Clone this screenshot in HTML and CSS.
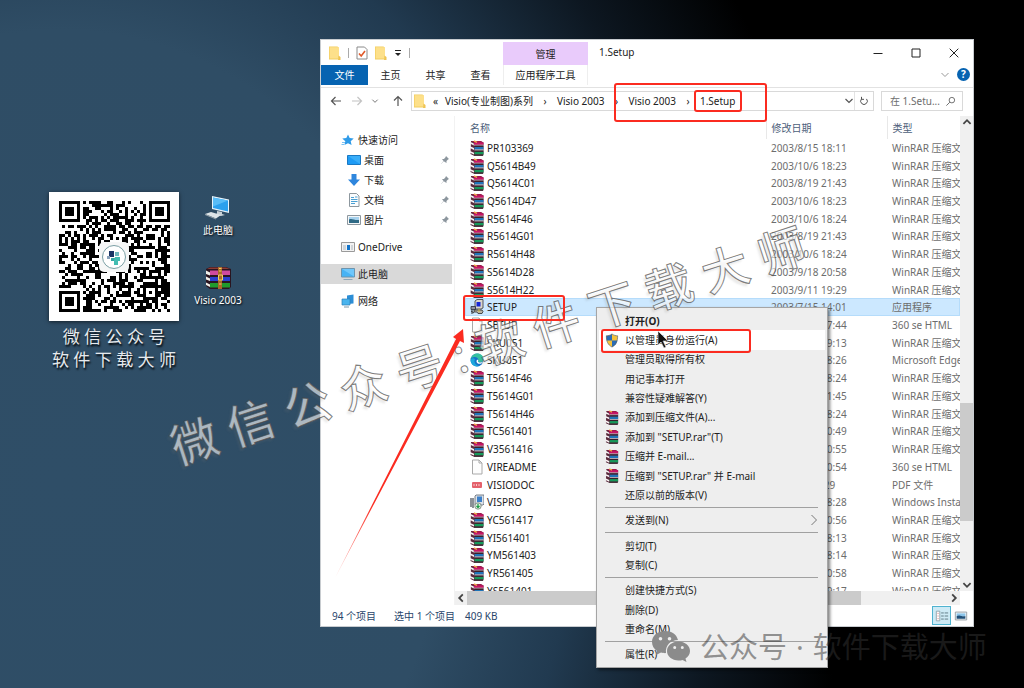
FILE: index.html
```html
<!DOCTYPE html>
<html lang="zh-CN">
<head>
  <meta charset="UTF-8">
  <meta name="viewport" content="width=device-width, initial-scale=1.0">
  <title>1.Setup</title>
  <link rel="stylesheet" href="styles.css">
</head>
<body>
  <svg class="sprite" aria-hidden="true">
    <symbol id="i-rar" viewBox="0 0 14 16">
      <path d="M1 1h9.500l3 1.500V15l-.5.7H4L.5 14z" fill="#5a2a3c"/>
      <path d="M1.500 1h9L13 2.300H4z" fill="#a3164c"/>
      <path d="M4 2.300h9.500v2.500H4z" fill="#cb1566"/>
      <path d="M4.500 7h9v2.600h-9z" fill="#1f74b8"/>
      <path d="M4.500 11.800h9v2.600h-9z" fill="#15995a"/>
      <path d="M0 1.800L3.800 3.600v1.800L0 3.600zM0 6.300l4 1.800v1.800L0 8.100zM0 11l4 1.800v1.800L0 12.800z" fill="#f8f3f5"/>
      <path d="M4 4.800h9.500v.8H4zM4.500 9.600h9v.8h-9z" fill="#e4dfe2"/>
      <path d="M4.500 6.200h9M4.500 11.100h9M4 15.200h9" stroke="#2b1c26" stroke-width=".9"/>
      <path d="M4 .8l3 1.500" stroke="#efb04a" stroke-width="1.300"/>
    </symbol>
    <symbol id="i-folder" viewBox="0 0 12 14">
      <path d="M0 .5h8.500l1 1V13.500H0z" fill="#f2cd60"/>
      <path d="M.7 1.200H10v11.300H.7z" fill="#fde08a"/>
      <path d="M9.500 9.500l2 1.500v3h-2.500z" fill="#efc453"/>
    </symbol>
    <symbol id="i-page" viewBox="0 0 14 16">
      <path d="M2.500 1h6.500l3 3v11h-9.500z" fill="#fdfdfd" stroke="#a9a9a9"/>
      <path d="M9 1v3h3" fill="none" stroke="#a9a9a9"/>
    </symbol>
    <symbol id="i-exe" viewBox="0 0 14 16">
      <path d="M5 2l2-1.500h6V9l-2 1H5z" fill="#d9d6cc" stroke="#33343a" stroke-width=".8"/>
      <path d="M6.500 3h4v4.500h-4z" fill="#1426d8"/>
      <path d="M1 7.500h4.500v3H1z" fill="#8f93a0" stroke="#2b2d38" stroke-width=".8"/>
      <path d="M4 11h8l1 1.500-1 2H8L7 13H4z" fill="#b7b4a6" stroke="#2c2b28" stroke-width=".8"/>
      <path d="M1 12l3 2M2 11v4" stroke="#333"/>
      <path d="M9 10v3" stroke="#d8c341"/>
    </symbol>
    <symbol id="i-edge" viewBox="0 0 14 16">
      <circle cx="7" cy="8" r="6.500" fill="#1573c8"/>
      <path d="M.6 7C1.500 3.500 4 1.500 7.500 1.500c3.500 0 6 2.600 6 5.600 0 2.400-2 3.600-4.300 3.300-1.300-.2-1.500-1-.9-1.800C8.800 6 6 4.600 3.400 5.300 2 5.700 1 6.300.6 7z" fill="#36c0a0"/>
      <path d="M5 7c-1.500 3 .5 6.500 4.500 7-4.500 1.500-8.500-1-8.900-5.500C1 6.500 3 5.500 5 7z" fill="#1da7dc"/>
      <path d="M8.300 8.600c-.6.8-.4 1.600.9 1.800 1.600.2 3-.2 4-1-.8 2-2.800 2.800-4.900 2.300-1.800-.5-2.300-2.300-1.300-3.900.8-.3 1.300 0 1.300.8z" fill="#fff"/>
    </symbol>
    <symbol id="i-pdf" viewBox="0 0 14 16">
      <rect x="2" y="5" width="10" height="6" rx="1" fill="#e4616b"/>
      <path d="M4 7v2M6.500 7v2M9 7v2" stroke="#f9c8cb"/>
    </symbol>
    <symbol id="i-msi" viewBox="0 0 14 16">
      <path d="M5 2l1-1h8v9l-1 1H5z" fill="#dde2e8" stroke="#59636e" stroke-width=".8"/>
      <path d="M7 2.500h5V8H7z" fill="#3b7fc9"/>
      <path d="M1 4v9M3 4v10" stroke="#3e4650" stroke-width="1.200"/>
      <circle cx="8" cy="12" r="3.200" fill="#e8f2e8" stroke="#5b6b60" stroke-width=".7"/>
      <path d="M8 9.800v3.600M6.500 12L8 13.600 9.500 12" stroke="#1d9a46" stroke-width="1.200" fill="none"/>
    </symbol>
    <symbol id="i-shield" viewBox="0 0 14 16">
      <path d="M7 1c2 1.500 4 2 6 2 0 6-1.500 9.500-6 12C2.500 12.500 1 9 1 3c2 0 4-.5 6-2z" fill="#f4c23c"/>
      <path d="M7 1v7H1.300C1 6.500 1 5 1 3c2 0 4-.5 6-2zM7 8h5.700c-.7 3.300-2.200 5.400-5.700 7z" fill="#2b6cb5"/>
      <path d="M7 1c2 1.500 4 2 6 2 0 6-1.500 9.500-6 12C2.500 12.500 1 9 1 3c2 0 4-.5 6-2z" fill="none" stroke="#59606a" stroke-width=".7"/>
    </symbol>
    <symbol id="i-star" viewBox="0 0 14 14">
      <path d="M7 1.500l1.700 3.600 4 .4-3 2.700.9 3.900L7 10.200l-3.600 1.900.9-3.900-3-2.700 4-.4z" fill="#2f9be8"/>
      <path d="M1 9.500h3M.5 11.500h2.500" stroke="#7fc2f2"/>
    </symbol>
    <symbol id="i-screen" viewBox="0 0 14 14">
      <path d="M.5 2.500h13v9H.5z" fill="#1e9bf5" stroke="#1979c4"/>
      <path d="M1 3l12 8V3z" fill="#3aaef9"/>
    </symbol>
    <symbol id="i-down" viewBox="0 0 14 14">
      <path d="M4.500 1h5v5.500H13L7 13 1 6.500h3.500z" fill="#2e86dd"/>
    </symbol>
    <symbol id="i-doc" viewBox="0 0 14 14">
      <path d="M2.500.5h7l2.500 2.500v10.500H2.500z" fill="#fafcfd" stroke="#8d979e"/>
      <path d="M4 4.500h3M4 6.500h6.500M4 8.500h6.500M4 10.500h4M8 4h2.500" stroke="#4aa0d4"/>
    </symbol>
    <symbol id="i-pic" viewBox="0 0 14 14">
      <path d="M.5 2.500h13v9H.5z" fill="#f4f6f7" stroke="#8d979e"/>
      <path d="M2 4h10v3H2z" fill="#a7d2ee"/>
      <path d="M2 6.500c3-1.500 5 1 10 .5V10H2z" fill="#2f6a86"/>
    </symbol>
    <symbol id="i-drive" viewBox="0 0 14 14">
      <path d="M.5 2.500h13v9H.5z" fill="#f2f2f2" stroke="#9a9a9a"/>
      <path d="M2 5h3v5H2z" fill="#cfd4d8"/>
      <path d="M6 5h3v5H6z" fill="#1173c9"/>
      <path d="M10 5h2v5h-2z" fill="#cfd4d8"/>
    </symbol>
    <symbol id="i-pc" viewBox="0 0 14 14">
      <path d="M.5 1.500h13v8.500H.5z" fill="#47b3f5" stroke="#6d94ae"/>
      <path d="M1 2l12 7.500V2z" fill="#6fc7fb"/>
      <path d="M2.500 12.500h9" stroke="#8fa7b8"/>
    </symbol>
    <symbol id="i-net" viewBox="0 0 14 14">
      <path d="M6 1.500l6.500-1v9L6 10z" fill="#2c8ed6"/>
      <path d="M1 5h8v6H1z" fill="#49b4ee" stroke="#2b7fb8" stroke-width=".7"/>
      <path d="M3 13h5" stroke="#7c98a8"/>
    </symbol>
    <symbol id="i-pin" viewBox="0 0 10 10">
      <path d="M6 1l3 3-1 .5-1.500 1.500v2L3.800 6.200 1 9l2.500-3L2 4h2L5.500 2.200z" fill="#8b959d"/>
    </symbol>
  </svg>

  <main class="desktop">
    <section class="promo">
      <div class="qr">
        <svg id="qr" viewBox="0 0 37 37" shape-rendering="crispEdges" role="img" aria-label="二维码"></svg>
        <svg class="qr-logo" viewBox="0 0 30 30" aria-hidden="true">
          <rect width="30" height="30" rx="5" fill="#f6f7f7"/>
          <circle cx="15" cy="15" r="11.500" fill="#fff" stroke="#7ba0a5"/>
          <path d="M10 9h5v6h-5z" fill="#1b3566"/>
          <path d="M16 10h4v4h-4z" fill="#6fb7bd"/>
          <path d="M8 14h3v3H8z" fill="#8aa2bb"/>
          <path d="M12 16h4v3h-4z" fill="#35a7a4"/>
          <path d="M16 15h5v4h-2v4h-4v-5z" fill="#43bdb2"/>
        </svg>
      </div>
      <p>微 信 公 众 号<br>软 件 下 载 大 师</p>
    </section>

    <nav class="shortcuts">
      <a href="#pc">
        <svg class="shortcut-icon" viewBox="0 0 30 26">
          <path d="M9 1l17 3.500V18L9 14z" fill="#e7f3fb"/>
          <path d="M10 2.500l15 3v11L10 13z" fill="#2ba0ee"/>
          <path d="M10 2.500l15 3-15 6z" fill="#58bcf7"/>
          <path d="M14 16l5 1v2l3 1-4 1-6-1.500 2-1z" fill="#c9d2d8"/>
          <path d="M2 19l6-2 10 3-5 3.500z" fill="#dfe5e8"/>
          <path d="M2 19l11 4.500v1L2 20z" fill="#96a3ab"/>
        </svg>
        <span>此电脑</span>
      </a>
      <a href="#visio">
        <svg class="shortcut-icon" viewBox="0 0 30 26">
          <path d="M3 4l4-2h16l5 2v18l-2 2H7l-4-3z" fill="#2a1520"/>
          <path d="M4 4l3-1.500h16L27 4H7z" fill="#8d3b33"/>
          <path d="M7 5.500h20v4.500H7z" fill="#cf4aa0"/>
          <path d="M7 12h20v4H7z" fill="#2a3fd0"/>
          <path d="M7 18h20v4.500H7z" fill="#1f9a2c"/>
          <path d="M3 5.500l4 2v3L3 9zM3 11.500l4 2V16l-4-1.500zM3 17.500l4 2V22l-4-2z" fill="#f0f0ea"/>
          <path d="M15 2h4v22h-4z" fill="#a8682a"/>
          <path d="M15.500 10h4v5h-4zM16 3.500h2.500M16 6h2.500M16 19h2.500" stroke="#f0d060" fill="none"/>
        </svg>
        <span>Visio 2003</span>
      </a>
    </nav>

    <section class="explorer">
      <header class="titlebar">
        <div class="quick-tools">
          <svg class="ic-folder"><use href="#i-folder"/></svg>
          <i></i>
          <svg class="ic-file" viewBox="0 0 12 14"><path d="M1 1h7.500L11 3.500V13H1z" fill="#fff" stroke="#8a8a8a"/><path d="M3 7.500l2.200 2.500L9 5" fill="none" stroke="#e0592a" stroke-width="1.600"/></svg>
          <svg class="ic-folder"><use href="#i-folder"/></svg>
          <svg class="ic-drop" viewBox="0 0 8 8"><path d="M1 1.500h6" stroke="#222"/><path d="M1 4h6L4 7z" fill="#222"/></svg>
          <i></i>
        </div>
        <div class="context-label">管理</div>
        <h1>1.Setup</h1>
        <div class="window-buttons">
          <button type="button" aria-label="最小化"><svg viewBox="0 0 10 10"><path d="M.5 5.500h9"/></svg></button>
          <button type="button" aria-label="最大化"><svg viewBox="0 0 10 10"><path d="M1 1h8v8H1z"/></svg></button>
          <button type="button" aria-label="关闭"><svg viewBox="0 0 10 10"><path d="M.7.7l8.600 8.600M9.300.7L.7 9.300"/></svg></button>
        </div>
      </header>

      <div class="ribbon">
        <button type="button" class="tab-file">文件</button>
        <button type="button">主页</button>
        <button type="button">共享</button>
        <button type="button">查看</button>
        <button type="button" class="tab-tools">应用程序工具</button>
        <svg class="ribbon-more" viewBox="0 0 10 10"><path d="M1.500 3L5 6.500 8.500 3" fill="none" stroke="#999"/></svg>
        <button type="button" class="help">?</button>
      </div>

      <div class="address-row">
        <div class="nav-buttons">
          <button type="button" aria-label="后退"><svg viewBox="0 0 12 12"><path d="M11 6H1.500M5.500 2l-4 4 4 4"/></svg></button>
          <button type="button" aria-label="前进" disabled><svg viewBox="0 0 12 12"><path d="M1 6h9.500M6.500 2l4 4-4 4"/></svg></button>
          <button type="button" class="small" aria-label="历史"><svg viewBox="0 0 12 12"><path d="M2 4l4 4 4-4"/></svg></button>
          <button type="button" aria-label="上移"><svg viewBox="0 0 12 12"><path d="M6 11V1.500M2 5.500l4-4 4 4"/></svg></button>
        </div>
        <div class="address">
          <svg class="ic-folder"><use href="#i-folder"/></svg>
          <span class="crumb-more">«</span>
          <a href="#c1">Visio(专业制图)系列</a><b>›</b>
          <a href="#c2">Visio 2003</a><b>›</b>
          <a href="#c3">Visio 2003</a><b>›</b>
          <a href="#c4">1.Setup</a>
          <button type="button" class="addr-drop" aria-label="展开"><svg viewBox="0 0 10 10"><path d="M1.500 3L5 6.500 8.500 3"/></svg></button>
          <button type="button" class="addr-refresh" aria-label="刷新"><svg viewBox="0 0 12 12"><path d="M3 3.500a4 4 0 1 0 6 0M3 1v3h3"/></svg></button>
        </div>
        <div class="search">
          <input type="text" aria-label="搜索" placeholder="在 1.Setu...">
          <svg viewBox="0 0 12 12"><circle cx="7.500" cy="4.500" r="3"/><path d="M5.300 6.700L1.500 10.500"/></svg>
        </div>
      </div>

      <div class="panes">
        <nav class="sidebar">
          <a href="#quick"><svg><use href="#i-star"/></svg>快速访问</a>
          <a href="#desk" class="sub"><svg><use href="#i-screen"/></svg>桌面<svg class="pin"><use href="#i-pin"/></svg></a>
          <a href="#down" class="sub"><svg><use href="#i-down"/></svg>下载<svg class="pin"><use href="#i-pin"/></svg></a>
          <a href="#docs" class="sub"><svg><use href="#i-doc"/></svg>文档<svg class="pin"><use href="#i-pin"/></svg></a>
          <a href="#pics" class="sub"><svg><use href="#i-pic"/></svg>图片<svg class="pin"><use href="#i-pin"/></svg></a>
          <a href="#onedrive" class="group"><svg><use href="#i-drive"/></svg>OneDrive</a>
          <a href="#thispc" class="group current"><svg><use href="#i-pc"/></svg>此电脑</a>
          <a href="#network" class="group"><svg><use href="#i-net"/></svg>网络</a>
        </nav>

        <div class="files">
          <div class="file-view">
            <table>
              <colgroup><col><col class="col-date"><col class="col-type"></colgroup>
              <thead><tr><th>名称</th><th>修改日期</th><th>类型</th></tr></thead>
              <tbody id="rows"></tbody>
            </table>
          </div>
          <div class="scroll-y">
            <svg viewBox="0 0 10 10"><path d="M2 6.500L5 3.500l3 3"/></svg>
            <div class="track"><span></span></div>
            <svg viewBox="0 0 10 10"><path d="M2 3.500l3 3 3-3"/></svg>
          </div>
          <div class="scroll-x">
            <svg viewBox="0 0 10 10"><path d="M6.500 2l-3 3 3 3"/></svg>
            <div class="track"><span></span></div>
            <svg viewBox="0 0 10 10"><path d="M3.500 2l3 3-3 3"/></svg>
          </div>
        </div>
      </div>

      <footer class="status">
        <span>94 个项目</span>
        <span class="divided">选中 1 个项目</span>
        <span>409 KB</span>
        <div class="views">
          <button type="button" class="active" aria-label="详细信息"><svg viewBox="0 0 16 16"><path d="M1.500 2.500h4v11h-4z" fill="#fff" stroke="#8aa0a8"/><path d="M3 5h1M3 8h1M3 11h1" stroke="#c55"/><path d="M7 4.500h3M11 4.500h4M7 8h3M11 8h4M7 11.500h3M11 11.500h4" stroke="#56707a"/></svg></button>
          <button type="button" aria-label="大图标"><svg viewBox="0 0 16 16"><path d="M1.500 3.500h13v9h-13z" fill="#f3f7fa" stroke="#8d979e"/><path d="M3 5h10v3H3z" fill="#8cc5ea"/><path d="M3 8c4-2 6 1 10 0v3H3z" fill="#1f4f78"/></svg></button>
        </div>
      </footer>
    </section>

    <div class="menu" role="menu">
      <button type="button" role="menuitem" class="default">打开(O)</button>
      <button type="button" role="menuitem" class="hover"><svg><use href="#i-shield"/></svg>以管理员身份运行(A)</button>
      <button type="button" role="menuitem">管理员取得所有权</button>
      <button type="button" role="menuitem">用记事本打开</button>
      <button type="button" role="menuitem">兼容性疑难解答(Y)</button>
      <button type="button" role="menuitem"><svg><use href="#i-rar"/></svg>添加到压缩文件(A)...</button>
      <button type="button" role="menuitem"><svg><use href="#i-rar"/></svg>添加到 "SETUP.rar"(T)</button>
      <button type="button" role="menuitem"><svg><use href="#i-rar"/></svg>压缩并 E-mail...</button>
      <button type="button" role="menuitem"><svg><use href="#i-rar"/></svg>压缩到 "SETUP.rar" 并 E-mail</button>
      <button type="button" role="menuitem">还原以前的版本(V)</button>
      <hr>
      <button type="button" role="menuitem">发送到(N)<svg class="submenu" viewBox="0 0 8 12"><path d="M1.500 1l5 5-5 5" fill="none" stroke="#777"/></svg></button>
      <hr>
      <button type="button" role="menuitem">剪切(T)</button>
      <button type="button" role="menuitem">复制(C)</button>
      <hr>
      <button type="button" role="menuitem">创建快捷方式(S)</button>
      <button type="button" role="menuitem">删除(D)</button>
      <button type="button" role="menuitem">重命名(M)</button>
      <hr>
      <button type="button" role="menuitem">属性(R)</button>
    </div>

    <p class="watermark">微 信 公 众 号 : 软 件 下 载 大 师</p>

    <svg class="marks" aria-hidden="true">
      <defs>
        <linearGradient id="fade" x1="0" y1="1" x2="0" y2="0">
          <stop offset="0" stop-color="#fb2b20" stop-opacity=".3"/>
          <stop offset=".3" stop-color="#fb2b20"/>
        </linearGradient>
      </defs>
      <g fill="none" stroke="#fb2b20" stroke-width="2">
        <rect x="615" y="84" width="151" height="37" rx="2"/>
        <rect x="695" y="91" width="46" height="20" rx="2"/>
        <rect x="464" y="296" width="100" height="24" rx="2"/>
        <rect x="602" y="330" width="148" height="22" rx="2"/>
      </g>
      <path d="M335 578L456 339l-3-2 10-8 1 14-4-2z" fill="url(#fade)"/>
      <path d="M658 331v14l3-3 3 6 2-1-3-6h5z" fill="#111" stroke="#eee" stroke-width=".6"/>
    </svg>

    <div class="account">
      <svg viewBox="0 0 40 34" aria-hidden="true">
        <path fill-rule="evenodd" d="M14 1C6 1 1 6 1 12c0 4 2 7 5 9l-1 4 5-2.500c2 .5 3 .7 5 .6C14 15 20 10 27 10 25.500 4 20.500 1 14 1zM9.500 7a1.800 1.800 0 1 1 0 3.600 1.800 1.800 0 0 1 0-3.600zm9 0a1.800 1.800 0 1 1 0 3.600 1.800 1.800 0 0 1 0-3.600z"/>
        <path fill-rule="evenodd" d="M27.500 11.500c-6.500 0-11.500 4.300-11.500 9.500s5 9.500 11.500 9.500c1.500 0 3-.2 4-.6L35.500 32l-1-3.500c2.800-1.800 4.500-4.500 4.500-7.500 0-5.200-5-9.500-11.500-9.500zM23.700 16a1.500 1.500 0 1 1 0 3 1.500 1.500 0 0 1 0-3zm7.600 0a1.500 1.500 0 1 1 0 3 1.500 1.500 0 0 1 0-3z"/>
      </svg>
      <span>公众号</span><span>·</span><span>软件下载大师</span>
    </div>
  </main>

  <script>
    const rar = 'WinRAR 压缩文件';
    const files = [
      ['rar', 'PR103369', '2003/8/15 18:11', rar],
      ['rar', 'Q5614B49', '2003/10/6 18:23', rar],
      ['rar', 'Q5614C01', '2003/8/19 21:43', rar],
      ['rar', 'Q5614D47', '2003/10/6 18:23', rar],
      ['rar', 'R5614F46', '2003/10/6 18:24', rar],
      ['rar', 'R5614G01', '2003/8/19 21:43', rar],
      ['rar', 'R5614H48', '2003/10/6 18:24', rar],
      ['rar', 'S5614D28', '2003/9/18 20:58', rar],
      ['rar', 'S5614H22', '2003/9/11 19:29', rar],
      ['exe', 'SETUP', '2003/7/15 14:01', '应用程序'],
      ['page', 'SETUP', '2003/7/28 17:44', '360 se HTML'],
      ['rar', 'SKU051', '2003/9/11 19:13', rar],
      ['edge', 'SKU051', '2003/8/15 18:26', 'Microsoft Edge'],
      ['rar', 'T5614F46', '2003/10/6 18:24', rar],
      ['rar', 'T5614G01', '2003/8/19 21:45', rar],
      ['rar', 'T5614H46', '2003/10/6 18:24', rar],
      ['rar', 'TC561401', '2003/8/18 20:49', rar],
      ['rar', 'V3561416', '2003/8/18 20:55', rar],
      ['page', 'VIREADME', '2003/7/28 20:54', '360 se HTML'],
      ['pdf', 'VISIODOC', '2003/8/7 9:29', 'PDF 文件'],
      ['msi', 'VISPRO', '2003/10/6 18:28', 'Windows Installer'],
      ['rar', 'YC561417', '2003/8/18 20:56', rar],
      ['rar', 'YI561401', '2003/8/15 18:13', rar],
      ['rar', 'YM561403', '2003/8/15 18:14', rar],
      ['rar', 'YR561405', '2003/8/18 20:58', rar],
      ['rar', 'YS561401', '2003/9/11 19:17', rar]
    ];

    document.getElementById('rows').innerHTML = files.map(([icon, name, date, type], i) =>
      `<tr${i === 9 ? ' class="selected"' : ''}><td><svg><use href="#i-${icon}"/></svg>${name}</td><td>${date}</td><td>${type}</td></tr>`
    ).join('');

    // QR modules: three finder squares, one alignment square, the rest filled from a seed
    function drawQr() {
      const size = 37;
      let seed = 2003;
      let d = '';
      const ring = (x, y, cx, cy) => Math.max(Math.abs(x - cx), Math.abs(y - cy));
      for (let y = 0; y < size; y++) {
        for (let x = 0; x < size; x++) {
          seed = (seed * 1103515245 + 12345) % 2147483648;
          let on = seed / 2147483648 < 0.52;
          for (const [cx, cy] of [[3, 3], [33, 3], [3, 33]]) {
            const r = ring(x, y, cx, cy);
            if (r <= 4) on = r === 3 || r < 2;
          }
          const a = ring(x, y, 30, 30);
          if (a <= 2) on = a !== 1;
          if (on) d += `M${x} ${y}h1v1h-1z`;
        }
      }
      document.getElementById('qr').innerHTML = `<path d="${d}"/>`;
    }

    drawQr();
  </script>
</body>
</html>
```

FILE: styles.css
```css
* {
  margin: 0;
  padding: 0;
  box-sizing: border-box;
}

body {
  font-family: "Noto Sans", "Noto Sans CJK SC", sans-serif;
  font-size: 10px;
  line-height: 16px;
  color: #222;
}

button,
input {
  font: inherit;
  color: inherit;
  background: none;
  border: none;
}

a {
  color: inherit;
  text-decoration: none;
}

svg {
  display: block;
  flex: none;
}

.sprite {
  display: none;
}

.desktop {
  position: relative;
  min-height: 100vh;
  overflow: hidden;
  background: radial-gradient(ellipse 860px 1000px at 60px 480px, #2f4e67 0, #2f4d65 45%, #213a50 60%, #0d1721 77%, #000 92%);
}

/* left side of the desktop */
.promo {
  position: absolute;
  left: 49px;
  top: 192px;
  width: 130px;
  color: #fff;
  text-align: center;
}

.qr {
  display: grid;
  place-items: center;
  padding: 9px;
  background: #fff;
  box-shadow: 0 1px 4px rgba(0,0,0,0.6);
}

.qr svg {
  grid-area: 1 / 1;
  width: 111px;
}

.qr .qr-logo {
  width: 30px;
}

.promo p {
  margin-top: 4px;
  font-size: 17px;
  line-height: 23px;
  white-space: nowrap;
  color: #e6eaee;
  text-shadow: 1px 2px 2px #000;
}

.shortcuts {
  position: absolute;
  left: 188px;
  top: 195px;
  width: 60px;
  display: grid;
  gap: 27px;
  color: #fff;
  text-shadow: 1px 1px 2px #000;
}

.shortcuts a {
  display: flex;
  flex-direction: column;
  align-items: center;
  gap: 1px;
}

.shortcut-icon {
  width: 30px;
  height: 26px;
}

/* explorer window */
.explorer {
  position: absolute;
  left: 320px;
  right: 50px;
  top: 39px;
  bottom: 61px;
  display: flex;
  flex-direction: column;
  background: #fff;
  border: 1px solid #c8ccd0;
}

.titlebar {
  display: flex;
  height: 25px;
}

.quick-tools {
  display: flex;
  align-items: center;
  gap: 7px;
  width: 182px;
  padding-left: 8px;
}

.quick-tools i {
  width: 1px;
  height: 10px;
  background: #aaa;
}

.ic-folder,
.ic-file {
  width: 12px;
  height: 14px;
}

.ic-drop {
  width: 8px;
  height: 8px;
}

.context-label {
  width: 85px;
  margin-top: 2px;
  background: #e9cbfb;
  line-height: 24px;
  text-align: center;
}

.titlebar h1 {
  padding-left: 11px;
  font-size: 10px;
  font-weight: 400;
  line-height: 25px;
}

.window-buttons {
  display: flex;
  margin-left: auto;
}

.window-buttons button {
  display: grid;
  place-items: center;
  width: 38px;
}

.window-buttons svg {
  width: 10px;
  height: 10px;
  fill: none;
  stroke: #222;
}

.ribbon {
  display: flex;
  align-items: center;
  height: 23px;
  padding-bottom: 3px;
  border-bottom: 1px solid #e2e2e2;
}

.ribbon button {
  width: 45px;
  height: 20px;
  line-height: 20px;
}

.ribbon .tab-file {
  width: 47px;
  background: #0663b1;
  color: #fff;
}

.ribbon .tab-tools {
  width: 85px;
  border: solid #eee;
  border-width: 0 1px;
}

.ribbon-more {
  width: 10px;
  height: 10px;
  margin-left: auto;
}

.ribbon .help {
  width: 13px;
  height: 13px;
  margin: 0 3px 0 7px;
  border-radius: 50%;
  background: #0663b1;
  color: #fff;
  font-weight: 700;
  line-height: 13px;
}

.address-row {
  display: flex;
  gap: 7px;
  padding: 3px 10px 5px 9px;
}

.nav-buttons {
  display: flex;
  align-items: center;
  gap: 8px;
  width: 74px;
}

.nav-buttons button {
  width: 13px;
}

.nav-buttons svg {
  width: 12px;
  height: 12px;
  fill: none;
  stroke: #555;
  stroke-width: 1.200;
}

.nav-buttons button:disabled {
  opacity: 0.35;
}

.nav-buttons .small svg {
  width: 8px;
}

.address {
  flex: 1;
  display: flex;
  align-items: center;
  height: 20px;
  padding-left: 2px;
  border: 1px solid #d9d9d9;
  white-space: nowrap;
}

.address b {
  width: 24px;
  font-weight: 400;
  text-align: center;
}

.crumb-more {
  width: 19px;
  text-align: center;
}

.address button {
  height: 18px;
}

.address button svg {
  width: 10px;
  height: 10px;
  fill: none;
  stroke: #555;
  stroke-width: 1.200;
}

.address .addr-drop {
  margin-left: auto;
}

.address .addr-refresh {
  padding: 0 4px;
  border-left: 1px solid #e3e3e3;
}

.search {
  display: flex;
  align-items: center;
  width: 82px;
  padding: 0 6px 0 8px;
  border: 1px solid #d9d9d9;
}

.search input {
  flex: 1;
  min-width: 0;
}

.search input::placeholder {
  color: #6d6d6d;
}

.search svg {
  width: 11px;
  height: 11px;
  fill: none;
  stroke: #666;
}

.panes {
  flex: 1;
  display: flex;
  min-height: 0;
}

.sidebar {
  width: 131px;
  padding-top: 14px;
}

.sidebar a {
  display: flex;
  align-items: center;
  gap: 3px;
  height: 20px;
  padding-left: 20px;
}

.sidebar svg {
  width: 14px;
  height: 14px;
}

.sidebar .sub {
  padding-left: 26px;
}

.sidebar .pin {
  width: 10px;
  height: 10px;
  margin: 0 2px 0 auto;
}

.sidebar .group {
  margin-top: 7px;
}

.sidebar .current {
  background: #d9d9d9;
}

.files {
  flex: 1;
  display: grid;
  grid-template: minmax(0, 1fr) 14px / minmax(0, 1fr) 13px;
  margin-left: 2px;
  border-left: 1px solid #f2f2f2;
}

.file-view {
  overflow: hidden;
  padding-left: 10px;
}

.file-view table {
  width: 100%;
  height: calc(100% + 9px);
  table-layout: fixed;
  border-collapse: collapse;
}

.col-date {
  width: 121px;
}

.col-type {
  width: 73px;
}

th,
td {
  overflow: hidden;
  padding-left: 5px;
  line-height: 16px;
  white-space: nowrap;
  text-align: left;
  vertical-align: middle;
  color: #6d6d6d;
}

th {
  height: 23px;
  border-left: 1px solid #e8e8e8;
  font-weight: 400;
  color: #4c607a;
}

th:first-child {
  border-left: none;
}

td:first-child {
  color: #222;
}

td svg {
  display: inline-block;
  width: 14px;
  height: 16px;
  margin-right: 3px;
  vertical-align: top;
}

.selected {
  background: #cce8ff;
  box-shadow: inset 0 0 0 1px #b5dcfb;
}

.scroll-x,
.scroll-y {
  display: flex;
  align-items: center;
  background: #f0f0f0;
}

.scroll-y {
  flex-direction: column;
}

.scroll-x svg,
.scroll-y svg {
  width: 12px;
  height: 12px;
  fill: none;
  stroke: #444;
  stroke-width: 1.500;
}

.track {
  flex: 1;
  display: flex;
  align-self: stretch;
}

.track span {
  background: #cbcbcb;
}

.scroll-x .track span {
  width: 82%;
}

.scroll-y .track {
  align-items: flex-end;
  padding-bottom: 58px;
}

.scroll-y .track span {
  width: 100%;
  height: 30%;
}

.status {
  display: flex;
  align-items: center;
  gap: 10px;
  height: 21px;
  padding-left: 11px;
  color: #28456b;
}

.status .divided {
  margin-left: 8px;
}

.views {
  display: flex;
  gap: 2px;
  margin-left: auto;
  padding-right: 4px;
}

.views button {
  display: grid;
  place-items: center;
  width: 16px;
  height: 19px;
}

.views .active {
  width: 19px;
  background: #cdeaf5;
  border: 1px solid #4fb3d0;
}

.views svg {
  width: 14px;
  height: 14px;
}

/* context menu */
.menu {
  position: absolute;
  left: 596px;
  top: 307px;
  display: flex;
  flex-direction: column;
  width: 232px;
  min-height: 361px;
  padding: 3px 2px;
  background: #eee;
  border: 1px solid #a5a5a5;
  box-shadow: 2px 2px 3px rgba(0,0,0,0.5);
}

.menu button {
  flex: 1;
  display: flex;
  align-items: center;
  padding-left: 26px;
  line-height: 18px;
  text-align: left;
  white-space: nowrap;
}

.menu button svg {
  width: 14px;
  height: 15px;
  margin: 0 6px 0 -20px;
}

.menu .submenu {
  width: 8px;
  height: 12px;
  margin: 0 7px 0 auto;
}

.menu .default {
  font-weight: 700;
}

.menu .hover {
  background: #fff;
}

.menu hr {
  margin: 2px 7px 3px 6px;
  border: none;
  border-top: 1px solid #a0a0a0;
}

/* overlays */
.watermark {
  position: absolute;
  left: 488px;
  top: 346px;
  font-size: 47px;
  font-weight: 500;
  line-height: 1;
  white-space: nowrap;
  color: rgba(255,255,255,0.6);
  -webkit-text-stroke: 1px rgba(70,70,70,0.7);
  text-shadow: -3px 2px 2px rgba(120,120,120,0.15);
  transform: translate(-50%, -50%) rotate(-18deg);
  pointer-events: none;
}

.marks {
  position: absolute;
  left: 0;
  top: 0;
  width: 100%;
  height: 100%;
  pointer-events: none;
}

.account {
  position: absolute;
  left: 651px;
  top: 627px;
  display: flex;
  align-items: center;
  gap: 9px;
  font-size: 29px;
  line-height: 40px;
  white-space: nowrap;
  color: rgba(50,50,50,0.5);
  pointer-events: none;
}

.account svg {
  width: 40px;
  height: 34px;
  fill: #8b8b8b;
}
```
